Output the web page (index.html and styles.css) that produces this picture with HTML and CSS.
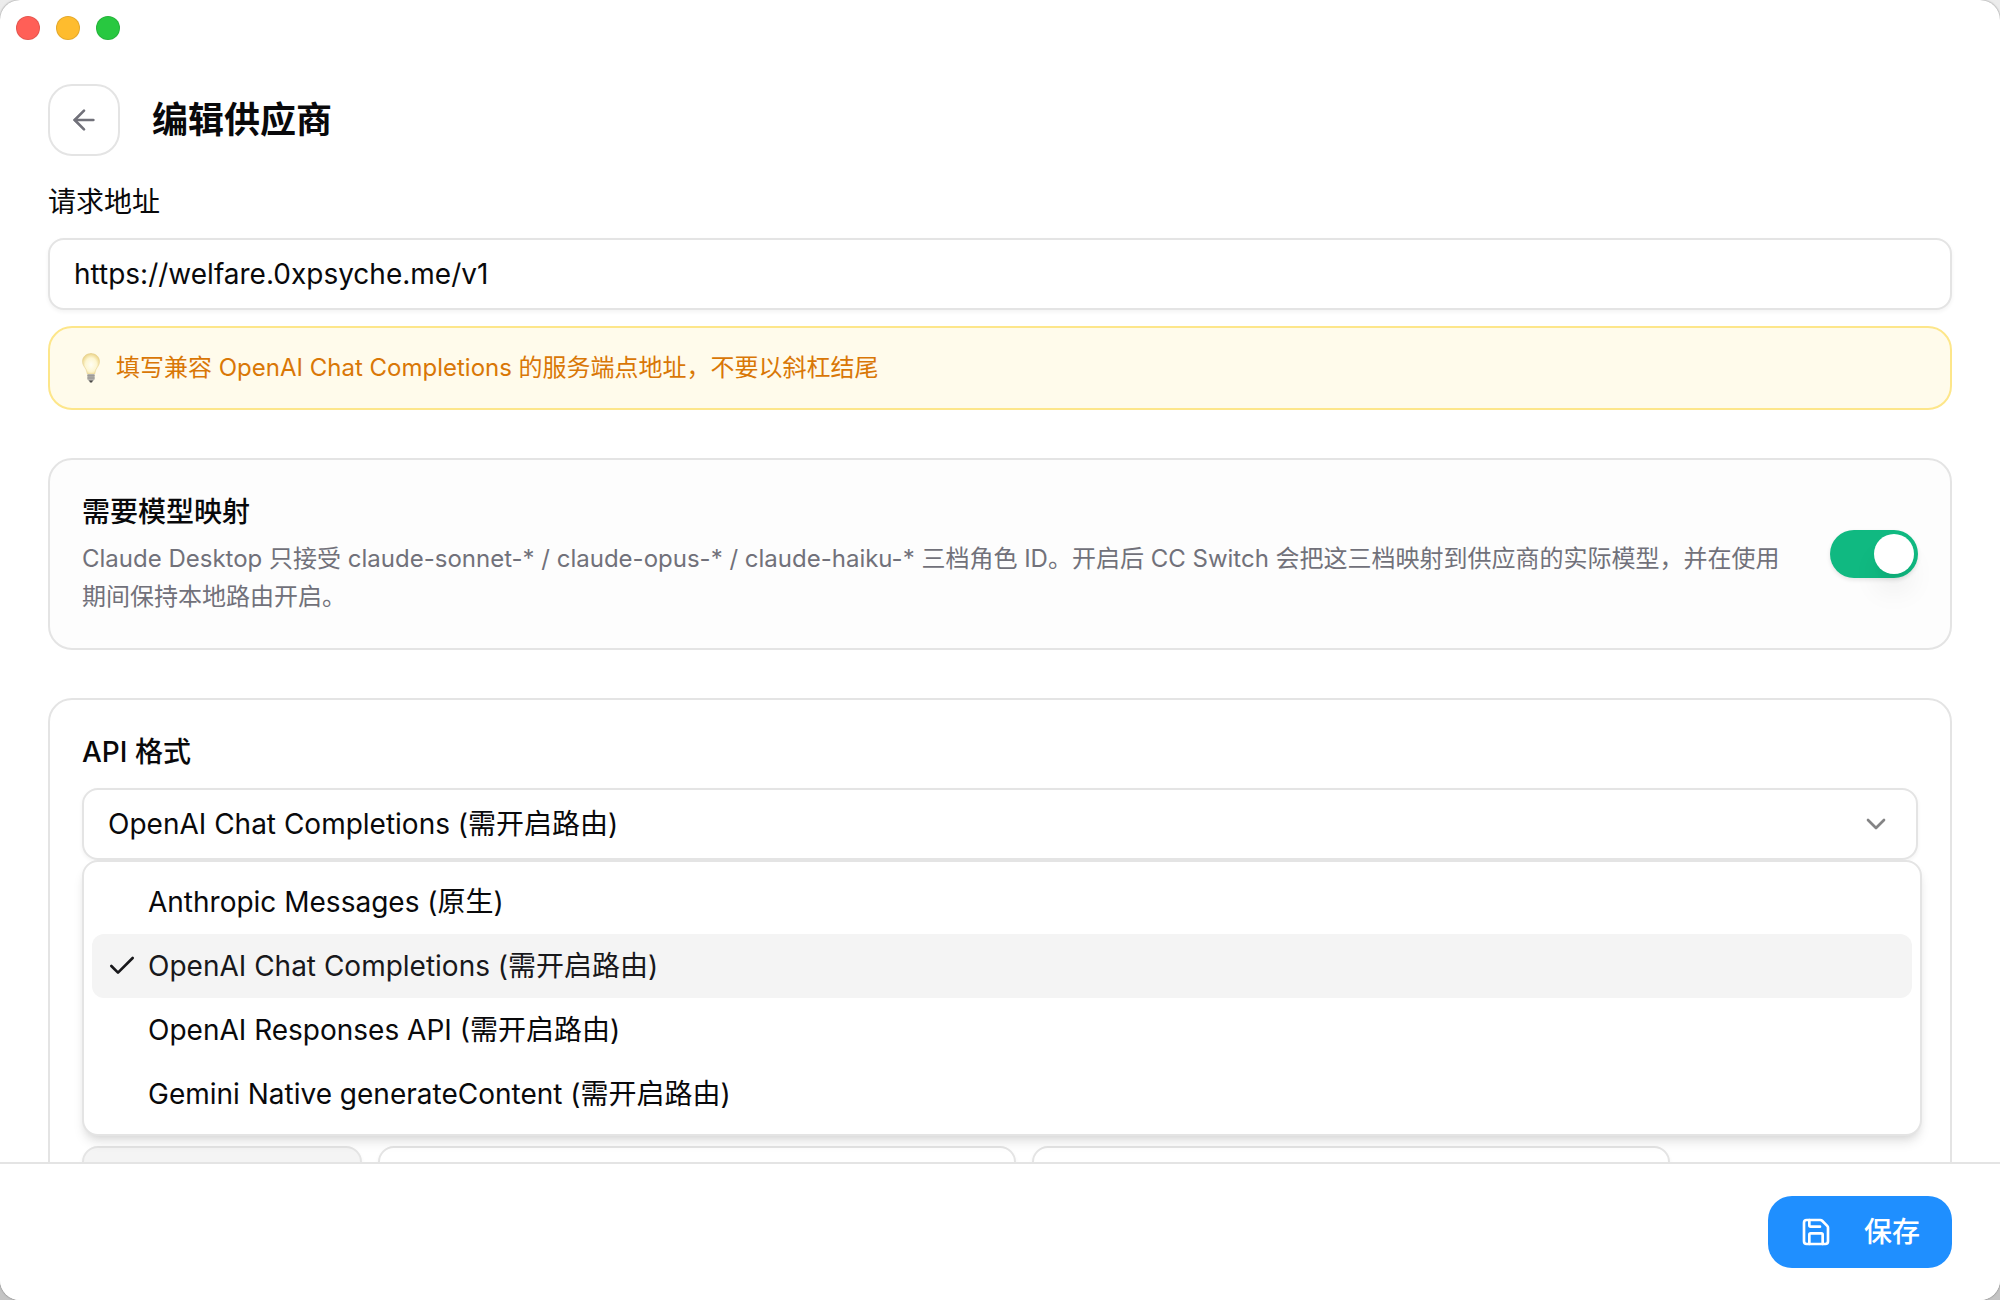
FILE: index.html
```html
<!DOCTYPE html>
<html lang="zh-CN">
<head>
    <meta charset="UTF-8">
    <title>编辑供应商</title>
    <link rel="stylesheet" href="styles.css">
</head>
<body>
<div class="window">
    <div class="titlebar">
        <button class="dot red" aria-label="关闭"></button>
        <button class="dot yellow" aria-label="最小化"></button>
        <button class="dot green" aria-label="缩放"></button>
    </div>
    <header class="header">
        <button class="back" aria-label="返回">
            <svg viewBox="0 0 24 24"><path d="m12 19-7-7 7-7"/><path d="M19 12H5"/></svg>
        </button>
        <h1>编辑供应商</h1>
    </header>
    <main class="content">
        <section class="field">
            <label class="label" for="url">请求地址</label>
            <input class="input" id="url" type="text" value="https://welfare.0xpsyche.me/v1">
            <p class="hint">
                <svg class="bulb" viewBox="0 0 18 30">
                    <defs>
                        <radialGradient id="glass" cx="50%" cy="55%" r="55%">
                            <stop offset="0" stop-color="#fffef4"/>
                            <stop offset="0.6" stop-color="#fdf6d2"/>
                            <stop offset="1" stop-color="#ecd58a"/>
                        </radialGradient>
                    </defs>
                    <path d="M9 .5C4 .5.5 4 .5 8.500c0 3.500 2.300 5.500 3.600 8.200.7 1.500.8 3 1.200 4.300h7.400c.4-1.300.5-2.800 1.200-4.300 1.300-2.700 3.600-4.700 3.600-8.200C17.500 4 14 .5 9 .5z" fill="url(#glass)" stroke="#e6d193" stroke-width=".6"/>
                    <path d="M5.500 21h7v5.500L11.200 28H6.800l-1.300-1.500z" fill="#b5b3ae"/>
                    <path d="M5.500 22.800h7M5.500 25h7" stroke="#85837f" stroke-width=".7"/>
                    <path d="M7 27.600h4l-1 1.900H8z" fill="#4c4b49"/>
                </svg>
                <span>填写兼容 OpenAI Chat Completions 的服务端点地址，不要以斜杠结尾</span>
            </p>
        </section>

        <section class="card mapping">
            <div class="mapping-text">
                <label class="label strong" for="mapping">需要模型映射</label>
                <p class="desc">Claude Desktop 只接受 claude-sonnet-* / claude-opus-* / claude-haiku-* 三档角色 ID。开启后 CC Switch 会把这三档映射到供应商的实际模型，并在使用期间保持本地路由开启。</p>
            </div>
            <input class="switch" id="mapping" type="checkbox" role="switch" checked>
        </section>

        <section class="card format">
            <label class="label strong" for="format">API 格式</label>
            <div class="select-wrap">
                <select class="input select" id="format">
                    <option>Anthropic Messages (原生)</option>
                    <option selected>OpenAI Chat Completions (需开启路由)</option>
                    <option>OpenAI Responses API (需开启路由)</option>
                    <option>Gemini Native generateContent (需开启路由)</option>
                </select>
                <svg class="chevron" viewBox="0 0 24 24"><path d="m6 9 6 6 6-6"/></svg>
                <ul class="menu" role="listbox">
                    <li role="option">Anthropic Messages (原生)</li>
                    <li role="option" class="current" aria-selected="true">
                        <svg class="check" viewBox="0 0 24 24"><path d="M20 6 9 17l-5-5"/></svg>
                        OpenAI Chat Completions (需开启路由)
                    </li>
                    <li role="option">OpenAI Responses API (需开启路由)</li>
                    <li role="option">Gemini Native generateContent (需开启路由)</li>
                </ul>
            </div>
            <div class="roles">
                <input class="input" type="text" aria-label="角色" disabled>
                <input class="input" type="text" aria-label="显示名称">
                <input class="input" type="text" aria-label="实际模型">
            </div>
        </section>
    </main>
    <footer class="footer">
        <button class="save">
            <svg viewBox="0 0 24 24"><path d="M15.200 3a2 2 0 0 1 1.400.6l3.800 3.800a2 2 0 0 1 .6 1.400V19a2 2 0 0 1-2 2H5a2 2 0 0 1-2-2V5a2 2 0 0 1 2-2z"/><path d="M17 21v-7a1 1 0 0 0-1-1H8a1 1 0 0 0-1 1v7"/><path d="M7 3v4a1 1 0 0 0 1 1h7"/></svg>
            保存
        </button>
    </footer>
</div>
</body>
</html>
```
FILE: styles.css
```css
* {
    box-sizing: border-box;
    margin: 0;
    padding: 0;
}
body {
    background: linear-gradient(#ececec, #c4c4c4);
    color: #09090b;
    font: 28px/40px Inter, "Noto Sans CJK SC", sans-serif;
}
button, input, select {
    font: inherit;
    color: inherit;
}
ul {
    list-style: none;
}
svg {
    fill: none;
    stroke: currentColor;
    stroke-width: 2;
    stroke-linecap: round;
    stroke-linejoin: round;
}
.window {
    display: flex;
    flex-direction: column;
    height: 100vh;
    overflow: hidden;
    border-radius: 20px;
    background-color: #fff;
    box-shadow: 0 0 2px rgba(0, 0, 0, 0.5);
}

/* title bar */
.titlebar {
    display: flex;
    gap: 16px;
    padding: 16px;
}
.dot {
    width: 24px;
    height: 24px;
    border: 1px solid rgba(0, 0, 0, 0.1);
    border-radius: 50%;
}
.red {
    background-color: #ff5f57;
}
.yellow {
    background-color: #febc2e;
}
.green {
    background-color: #28c840;
}

/* header */
.header {
    display: flex;
    align-items: center;
    gap: 32px;
    padding: 28px 48px 26px;
}
.header h1 {
    font-size: 36px;
    font-weight: 600;
}
.back {
    display: flex;
    align-items: center;
    justify-content: center;
    width: 72px;
    height: 72px;
    border: 2px solid #e4e4e4;
    border-radius: 24px;
    background-color: #fff;
    color: #71717a;
}
.back svg {
    width: 32px;
    height: 32px;
}

/* form */
.content {
    display: flex;
    flex: 1;
    flex-direction: column;
    gap: 48px;
    min-height: 0;
    padding: 0 48px;
    overflow: hidden;
}
.field, .format {
    display: flex;
    flex-direction: column;
    gap: 16px;
}
.strong {
    font-weight: 500;
}
.input {
    width: 100%;
    height: 72px;
    padding: 0 24px;
    border: 2px solid #e4e4e4;
    border-radius: 16px;
    background-color: #fff;
    box-shadow: 0 2px 4px rgba(0, 0, 0, 0.05);
}
.hint {
    display: flex;
    align-items: center;
    gap: 16px;
    height: 84px;
    padding: 0 32px;
    border: 2px solid #fde68a;
    border-radius: 24px;
    background-color: #fffbeb;
    color: #d97706;
    font-size: 24px;
}
.bulb {
    width: 18px;
    height: 30px;
    stroke: none;
}
.card {
    flex-shrink: 0;
    padding: 32px;
    border: 2px solid #e4e4e4;
    border-radius: 24px;
}
.mapping {
    display: flex;
    align-items: center;
    gap: 32px;
    background-color: #fdfdfd;
}
.mapping-text {
    display: flex;
    flex: 1;
    flex-direction: column;
    gap: 8px;
}
.desc {
    color: #71717a;
    font-size: 24px;
    line-height: 38px;
}
.switch {
    appearance: none;
    flex-shrink: 0;
    width: 88px;
    height: 48px;
    padding: 4px;
    border-radius: 24px;
    background-color: #10b981;
    box-shadow: 0 2px 4px rgba(0, 0, 0, 0.1);
}
.switch::before {
    content: "";
    display: block;
    width: 40px;
    height: 40px;
    margin-left: auto;
    border-radius: 50%;
    background-color: #fff;
    box-shadow: 0 20px 30px -6px rgba(0, 0, 0, 0.1), 0 8px 12px -8px rgba(0, 0, 0, 0.1);
}

/* api format */
.select-wrap {
    position: relative;
}
.select {
    display: block;
    appearance: none;
}
.chevron {
    position: absolute;
    top: 20px;
    right: 26px;
    width: 32px;
    height: 32px;
    color: #848485;
}
.menu {
    position: absolute;
    z-index: 1;
    top: 72px;
    left: 0;
    right: -4px;
    padding: 8px;
    border: 2px solid #e4e4e4;
    border-radius: 16px;
    background-color: #fff;
    box-shadow: 0 8px 12px -2px rgba(0, 0, 0, 0.1), 0 4px 8px -4px rgba(0, 0, 0, 0.1);
}
.menu li {
    position: relative;
    padding: 12px 16px 12px 56px;
    border-radius: 12px;
}
.menu .current {
    background-color: #f4f4f4;
    color: #18181b;
}
.check {
    position: absolute;
    top: 16px;
    left: 14px;
    width: 32px;
    height: 32px;
}
.roles {
    display: grid;
    grid-template-columns: 280px 1fr 1fr 232px;
    gap: 16px;
    /* room for the open menu */
    margin-top: 270px;
}
.roles .input:disabled {
    background-color: #f4f4f4;
}

/* footer */
.footer {
    display: flex;
    flex-shrink: 0;
    justify-content: flex-end;
    padding: 32px 48px;
    border-top: 2px solid #e4e4e4;
    background-color: #fff;
}
.save {
    display: flex;
    align-items: center;
    gap: 32px;
    height: 72px;
    padding: 0 32px;
    border: none;
    border-radius: 24px;
    background-color: #1f8fff;
    color: #fff;
    font-weight: 500;
}
.save svg {
    width: 32px;
    height: 32px;
}
```
